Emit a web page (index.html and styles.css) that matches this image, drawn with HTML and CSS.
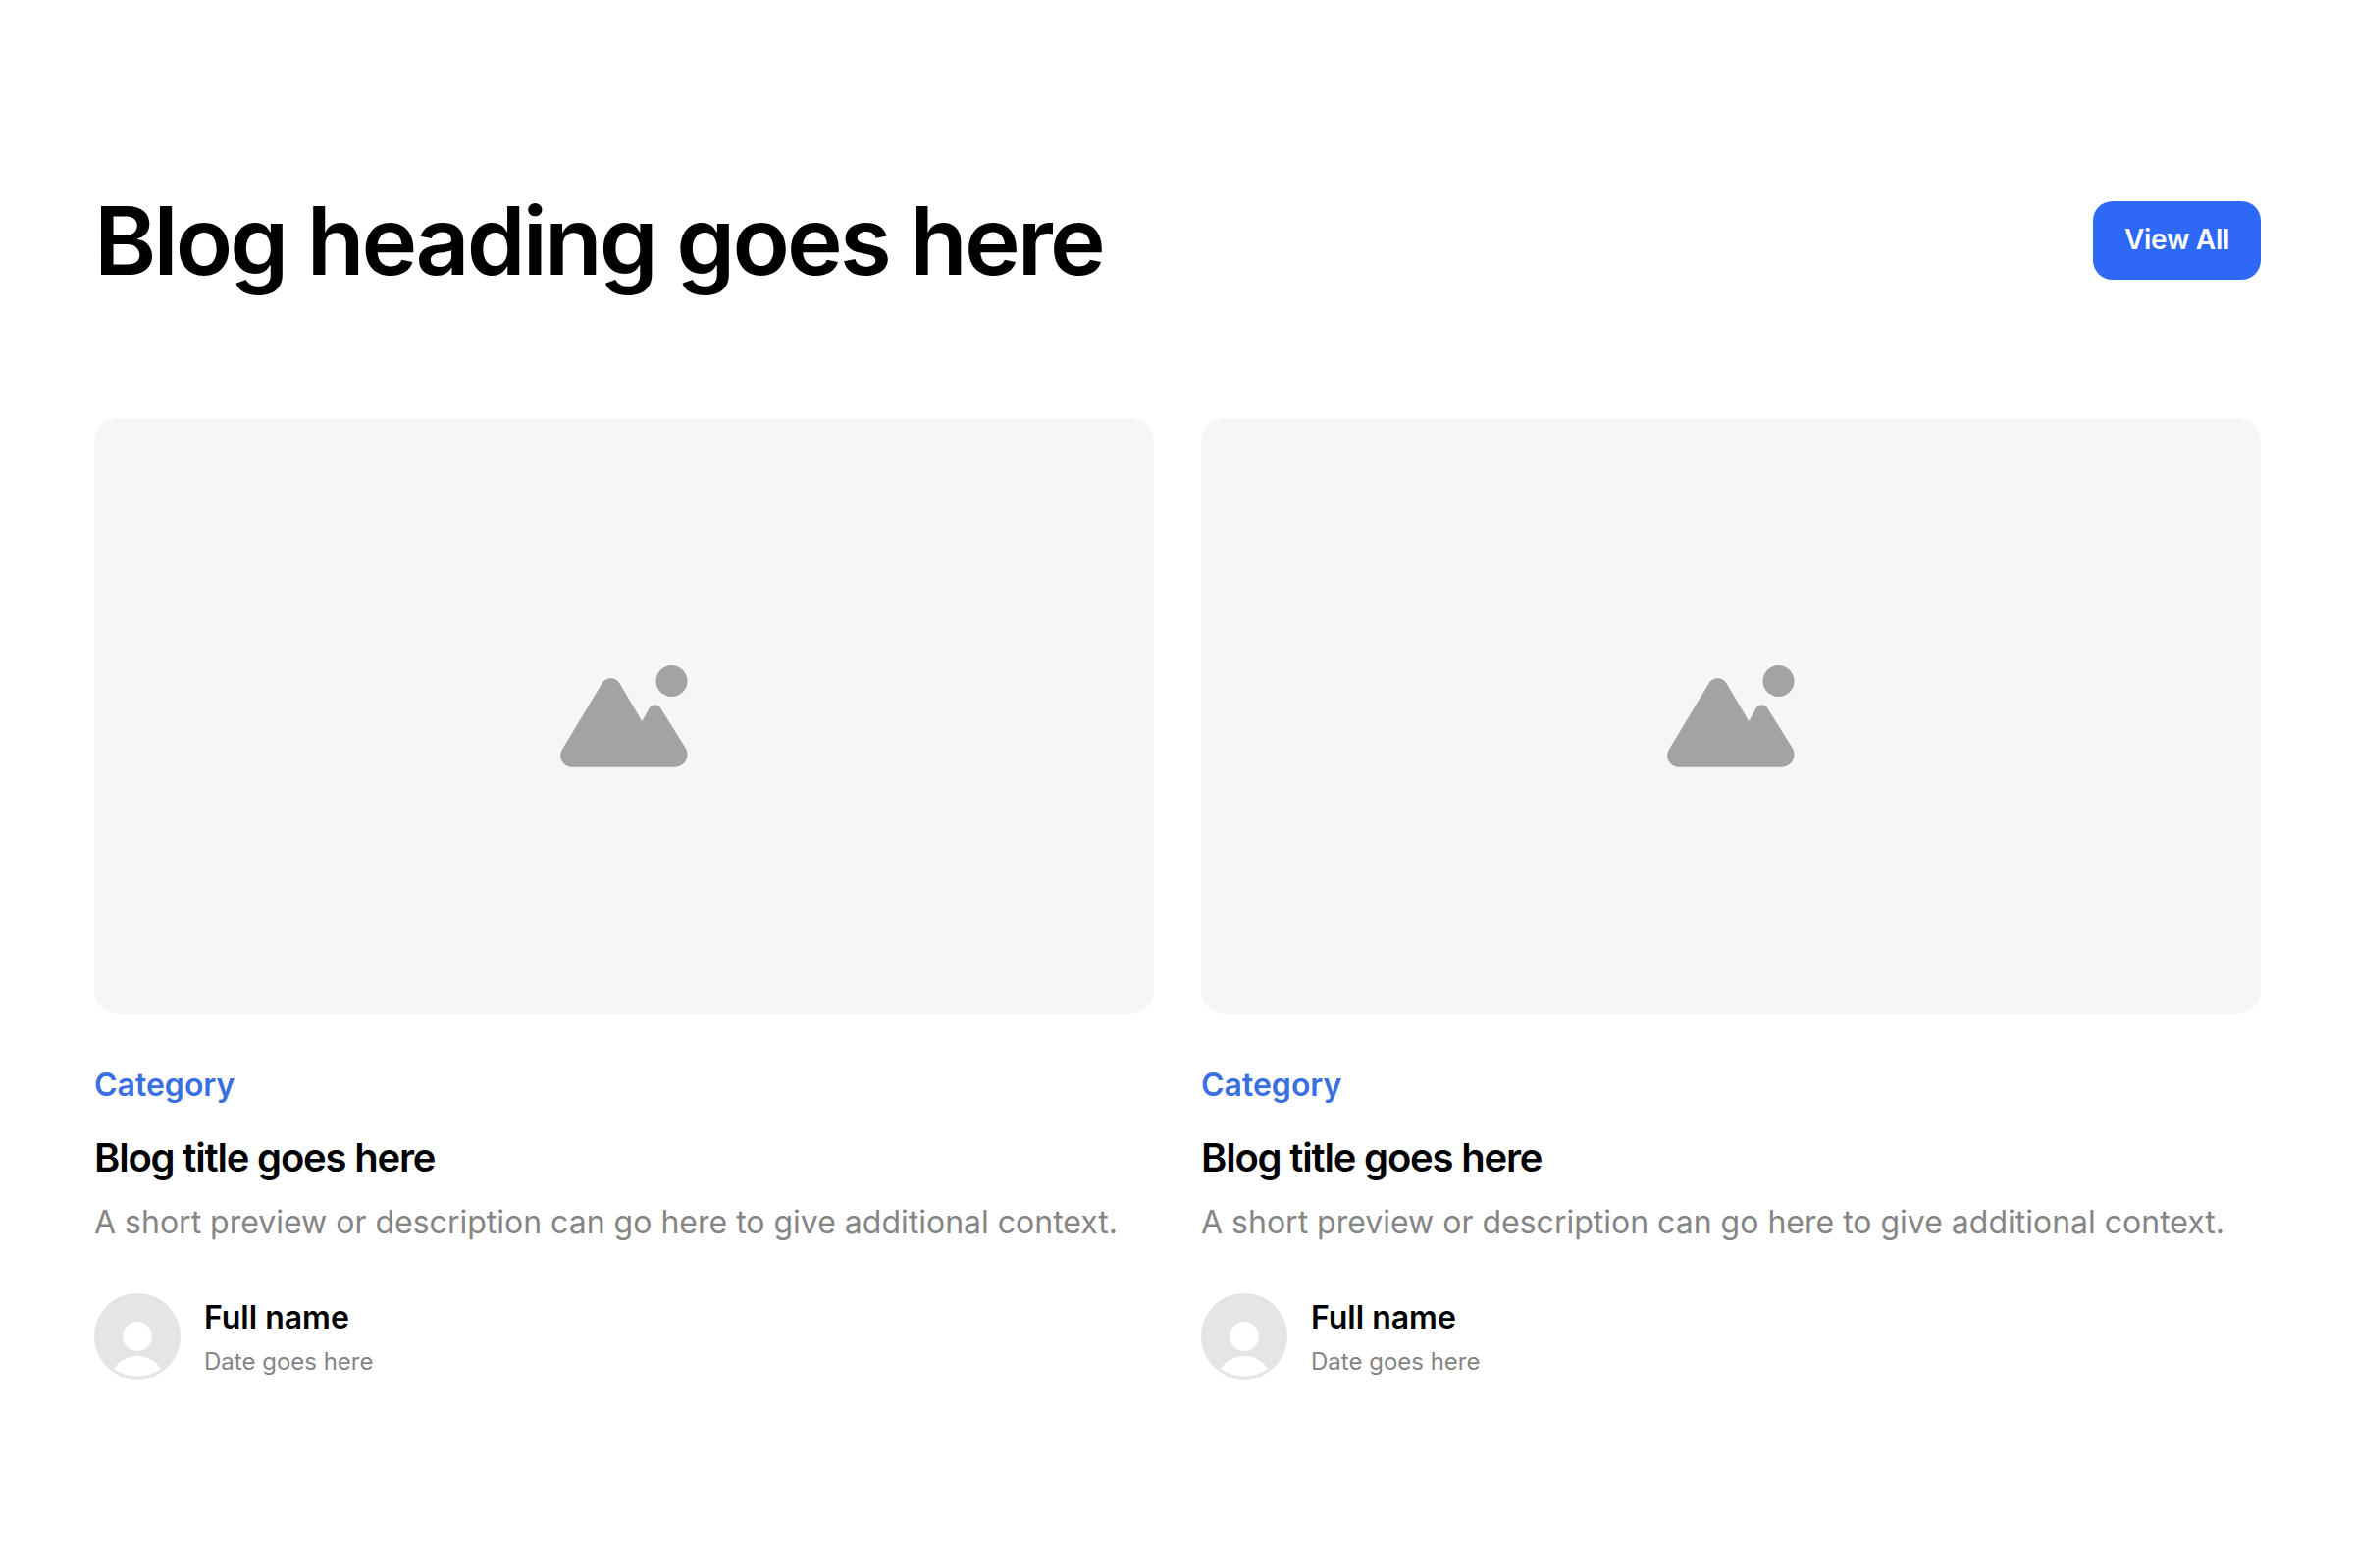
FILE: index.html
```html
<!DOCTYPE html>
<html lang="en">
<head>
    <meta charset="UTF-8">
    <meta name="viewport" content="width=device-width, initial-scale=1.0">
    <link rel="stylesheet" href="styles.css">
    <title>Blog</title>
</head>
<body>

    <section class="blog">
        <div class="blog-header">
            <h1 class="blog-heading">Blog heading goes here</h1>
            <a class="view-all" href="#">View All</a>
        </div>

        <div class="blog-grid">
            <article class="post">
                <div class="post-image">
                    <svg class="image-icon" viewBox="0 0 132 106">
                        <circle cx="114.5" cy="17" r="16"/>
                        <path d="M43.3 19.7C47.5 12.5 57.5 12.5 61.7 19.7L84.3 58L91.7 44.7C94 40 101 40 103.3 44.7L128.3 84.7C134 93 128 104.7 118.3 104.7L13.3 104.7C3 104.7 -2 94 3.3 86.3Z"/>
                    </svg>
                </div>
                <div class="post-category">Category</div>
                <h2 class="post-title">Blog title goes here</h2>
                <p class="post-text">A short preview or description can go here to give additional context.</p>
                <div class="author">
                    <svg class="avatar" viewBox="0 0 88 88">
                        <circle class="avatar-bg" cx="44" cy="44" r="44"/>
                        <circle class="avatar-fg" cx="44" cy="44" r="15"/>
                        <path class="avatar-fg" d="M20 77C25 69 34 64 44 64C54 64 63 69 68 77C62 82 53 84.500 44 84.500C35 84.500 26 82 20 77Z"/>
                    </svg>
                    <div class="author-info">
                        <div class="author-name">Full name</div>
                        <div class="author-date">Date goes here</div>
                    </div>
                </div>
            </article>

            <article class="post">
                <div class="post-image">
                    <svg class="image-icon" viewBox="0 0 132 106">
                        <circle cx="114.5" cy="17" r="16"/>
                        <path d="M43.3 19.7C47.5 12.5 57.5 12.5 61.7 19.7L84.3 58L91.7 44.7C94 40 101 40 103.3 44.7L128.3 84.7C134 93 128 104.7 118.3 104.7L13.3 104.7C3 104.7 -2 94 3.3 86.3Z"/>
                    </svg>
                </div>
                <div class="post-category">Category</div>
                <h2 class="post-title">Blog title goes here</h2>
                <p class="post-text">A short preview or description can go here to give additional context.</p>
                <div class="author">
                    <svg class="avatar" viewBox="0 0 88 88">
                        <circle class="avatar-bg" cx="44" cy="44" r="44"/>
                        <circle class="avatar-fg" cx="44" cy="44" r="15"/>
                        <path class="avatar-fg" d="M20 77C25 69 34 64 44 64C54 64 63 69 68 77C62 82 53 84.500 44 84.500C35 84.500 26 82 20 77Z"/>
                    </svg>
                    <div class="author-info">
                        <div class="author-name">Full name</div>
                        <div class="author-date">Date goes here</div>
                    </div>
                </div>
            </article>
        </div>
    </section>

</body>
</html>
```

FILE: styles.css
```css
* {
    box-sizing: border-box;
}

body {
    margin: 0;
    background-color: #fff;
    color: #000;
    font-family: Inter, "Liberation Sans", sans-serif;
}

.blog {
    padding: 187px 96px 0;
}

.blog-header {
    display: flex;
    justify-content: space-between;
    align-items: center;
    margin-bottom: 123px;
}

.blog-heading {
    margin: 0;
    font-size: 96px;
    line-height: 116px;
    font-weight: 600;
    letter-spacing: -0.03em;
}

.view-all {
    display: block;
    width: 171px;
    height: 80px;
    border-radius: 20px;
    background-color: #2d68f6;
    color: #fff;
    font-size: 28px;
    font-weight: 600;
    letter-spacing: -0.3px;
    line-height: 79px;
    text-align: center;
    text-decoration: none;
}

.blog-grid {
    display: grid;
    grid-template-columns: 1fr 1fr;
    gap: 48px;
}

.post-image {
    display: flex;
    justify-content: center;
    align-items: center;
    height: 607px;
    margin-bottom: 51px;
    border-radius: 24px;
    background-color: #f6f6f6;
}

.image-icon {
    width: 132px;
    height: 106px;
    fill: #a3a3a3;
}

.post-category {
    margin-bottom: 28px;
    color: #3a6fe0;
    font-size: 32px;
    line-height: 44px;
    font-weight: 600;
}

.post-title {
    margin: 0 0 20px;
    font-size: 40px;
    line-height: 48px;
    font-weight: 600;
    letter-spacing: -0.03em;
}

.post-text {
    margin: 0 0 50px;
    color: #858585;
    font-size: 32px;
    line-height: 44px;
}

.author {
    display: flex;
    align-items: center;
    gap: 24px;
}

.avatar {
    width: 88px;
    height: 88px;
}

.avatar-bg {
    fill: #e5e5e5;
}

.avatar-fg {
    fill: #fff;
}

.author-info {
    padding-top: 3px;
}

.author-name {
    margin-bottom: 5px;
    font-size: 32px;
    line-height: 44px;
    font-weight: 600;
}

.author-date {
    color: #858585;
    font-size: 24px;
    line-height: 36px;
}
```
